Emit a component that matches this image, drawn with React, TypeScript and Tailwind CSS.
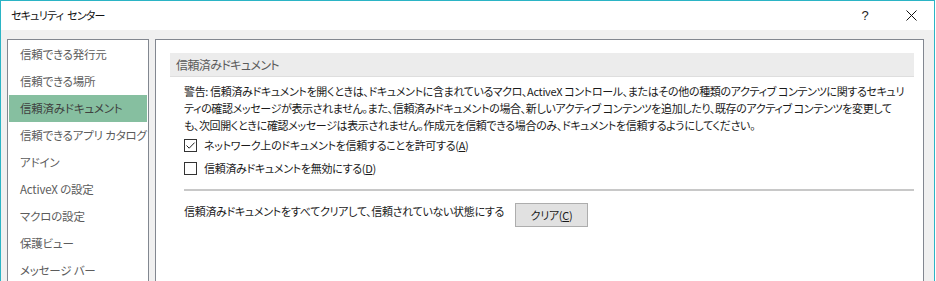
import React from 'react';

const jp = "font-['Noto_Sans_CJK_JP','Noto_Sans',sans-serif] [font-feature-settings:'palt']";

const navItems = [
  '信頼できる発行元',
  '信頼できる場所',
  '信頼済みドキュメント',
  '信頼できるアプリ カタログ',
  'アドイン',
  'ActiveX の設定',
  'マクロの設定',
  '保護ビュー',
  'メッセージ バー',
];

const warningLines = [
  '警告: 信頼済みドキュメントを開くときは、ドキュメントに含まれているマクロ、ActiveX コントロール、またはその他の種類のアクティブ コンテンツに関するセキュリ',
  'ティの確認メッセージが表示されません。また、信頼済みドキュメントの場合、新しいアクティブ コンテンツを追加したり、既存のアクティブ コンテンツを変更して',
  'も、次回開くときに確認メッセージは表示されません。作成元を信頼できる場合のみ、ドキュメントを信頼するようにしてください。',
];

function Checkbox({ checked }: { checked: boolean }) {
  return (
    <span className="flex h-[13px] w-[13px] shrink-0 items-center justify-center border border-[#333333] bg-white">
      {checked && (
        <svg width="11" height="11" viewBox="0 0 11 11">
          <path d="M1.5 5.5 L4.2 8.2 L9.6 2.6" fill="none" stroke="#222" strokeWidth="1" />
        </svg>
      )}
    </span>
  );
}

function CheckRow({ checked, label, accel }: { checked: boolean; label: string; accel: string }) {
  return (
    <label className="flex h-[20px] items-center gap-[7px]">
      <Checkbox checked={checked} />
      <span className="whitespace-nowrap text-[11px] tracking-[-0.3px] text-[#1a1a1a]">
        {label}(<span className="underline">{accel}</span>)
      </span>
    </label>
  );
}

export default function App() {
  return (
    <div className={`h-[281px] w-[936px] overflow-hidden bg-white ${jp}`}>
      <div className="flex h-[281px] w-[935px] flex-col border-x border-t border-[#2bb4c5]">
        {/* title bar */}
        <div className="flex h-[29px] shrink-0 items-center justify-between bg-white">
          <span className="pl-[10px] text-[11px] tracking-[-0.8px] text-[#111]">
            セキュリティ<span className="pl-[4px]">センター</span>
          </span>
          <div className="flex h-full">
            <span className="flex w-[46px] items-center justify-center text-[13px] text-[#222] font-['Liberation_Sans',sans-serif]">?</span>
            <span className="flex w-[46px] items-center justify-center">
              <svg width="11" height="11" viewBox="0 0 11 11">
                <path d="M0.5 0.5 L10.5 10.5 M10.5 0.5 L0.5 10.5" stroke="#111" strokeWidth="1" />
              </svg>
            </span>
          </div>
        </div>

        {/* body */}
        <div className="flex min-h-0 flex-1 gap-[6px] overflow-hidden bg-[#f0f0f0] pl-[6px] pr-[10px] pt-[9px]">
          <nav className="flex h-[260px] w-[142px] shrink-0 flex-col border border-[#828790] bg-white p-px">
            {navItems.map((item, i) => (
              <div
                key={item}
                className={`flex h-[27px] shrink-0 items-center whitespace-nowrap pl-[11px] text-[11.5px] tracking-[-0.2px] ${
                  i === 2 ? 'bg-[#86bfa0] text-[#3f3f3f]' : 'text-[#5c5c5c]'
                }`}
              >
                {item}
              </div>
            ))}
          </nav>

          <section className="h-[260px] flex-1 border border-[#828790] bg-white pl-[14px] pr-[9px] pt-[13px]">
            <div className="flex h-[24px] items-center border-b border-[#dedede] bg-[#ececec] px-[6px] text-[12px] tracking-[-0.6px] text-[#5a5a5a]">
              信頼済みドキュメント
            </div>

            <div className="pl-[14px] pt-[6px]">
              <p className="text-[11px] leading-[17px] tracking-[-0.35px] text-[#1a1a1a]">
                {warningLines.map((line) => (
                  <span key={line} className="block whitespace-nowrap">
                    {line}
                  </span>
                ))}
              </p>

              <div className="mt-[1px] flex flex-col gap-[3px]">
                <CheckRow checked label="ネットワーク上のドキュメントを信頼することを許可する" accel="A" />
                <CheckRow checked={false} label="信頼済みドキュメントを無効にする" accel="D" />
              </div>

              <div className="mt-[11px] h-[2px] bg-[#c8c8c8]" />

              <div className="mt-[12px] flex items-start">
                <span className="w-[331px] shrink-0 whitespace-nowrap text-[11px] leading-[17px] tracking-[-0.3px] text-[#1a1a1a]">
                  信頼済みドキュメントをすべてクリアして、信頼されていない状態にする
                </span>
                <button className="h-[24px] w-[73px] shrink-0 border border-[#adadad] bg-[#e1e1e1] text-[11px] tracking-[-0.3px] text-[#1a1a1a]">
                  クリア(<span className="underline">C</span>)
                </button>
              </div>
            </div>
          </section>
        </div>
      </div>
    </div>
  );
}
